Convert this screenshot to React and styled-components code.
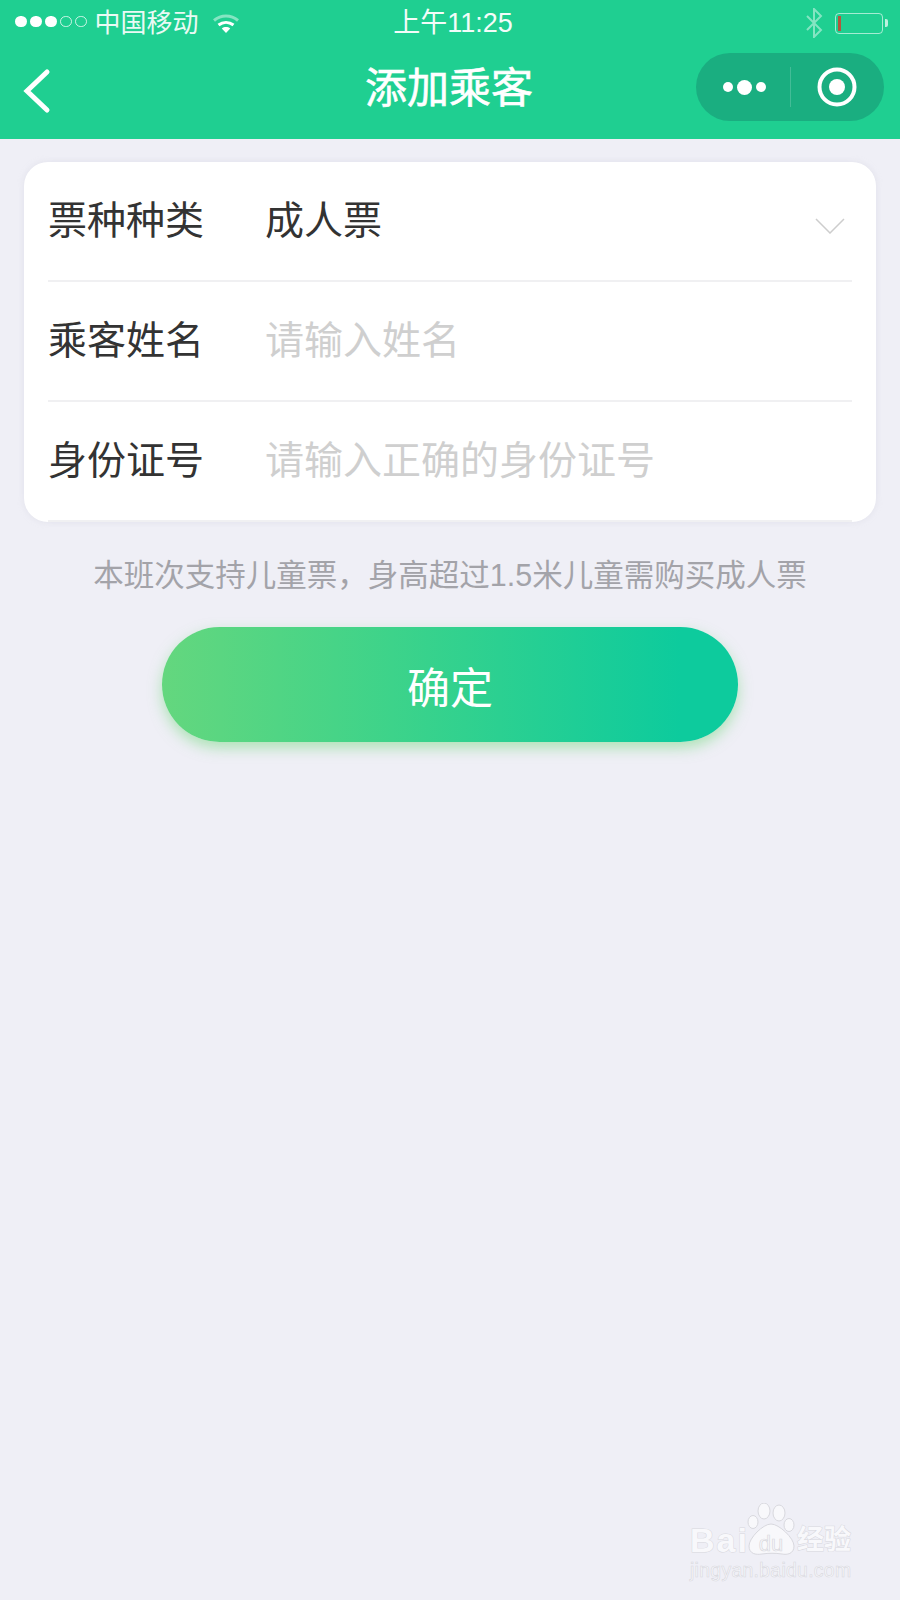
import React from 'react';
import styled, { createGlobalStyle } from 'styled-components';

const GlobalStyle = createGlobalStyle`
  html, body {
    margin: 0;
    padding: 0;
    background: #efeff6;
  }
  body {
    font-family: 'Liberation Sans', 'Noto Sans CJK SC', sans-serif;
  }
  * {
    box-sizing: border-box;
  }
`;

const Page = styled.div`
  position: relative;
  width: 900px;
  height: 1600px;
  overflow: hidden;
  background: #efeff6;
`;

const TopArea = styled.header`
  height: 139px;
  background: #1fcf91;
  color: #fff;
`;

const StatusBar = styled.div`
  display: grid;
  grid-template-columns: 1fr auto 1fr;
  align-items: center;
  height: 44px;
  padding: 0 12px 0 15px;
`;

const StatusLeft = styled.div`
  display: flex;
  align-items: center;
`;

const StatusRight = styled.div`
  display: flex;
  align-items: center;
  justify-content: flex-end;
`;

const Signal = styled.div`
  display: flex;
  gap: 3.5px;
  margin: -3px 8px 0 0;
`;

const SignalDot = styled.span`
  width: 11.5px;
  height: 11.5px;
  border-radius: 50%;
  border: 1px solid rgba(255, 255, 255, 0.75);
  background: ${(p) => (p.$on ? '#fff' : 'transparent')};
`;

const Carrier = styled.span`
  font-size: 26px;
  line-height: 46px;
  opacity: 0.9;
`;

const Clock = styled.span`
  margin-left: 3px;
  font-size: 27px;
  line-height: 46px;
  opacity: 0.95;
`;

const WifiIcon = styled.svg`
  margin-left: 13px;
  margin-top: 1px;
`;

const BluetoothIcon = styled.svg`
  margin-right: 12px;
`;

const Battery = styled.div`
  position: relative;
  width: 48px;
  height: 21px;
  margin-right: 5px;
  padding: 2px;
  border: 1.5px solid rgba(255, 255, 255, 0.6);
  border-radius: 4px;

  &::after {
    content: '';
    position: absolute;
    right: -6px;
    top: 5px;
    width: 3px;
    height: 8px;
    border-radius: 0 2px 2px 0;
    background: rgba(255, 255, 255, 0.7);
  }
`;

const BatteryLevel = styled.div`
  width: 3px;
  height: 100%;
  background: #b5563c;
`;

const NavBar = styled.div`
  display: grid;
  grid-template-columns: 1fr auto 1fr;
  align-items: center;
  height: 86px;
  padding: 0 16px 0 14px;
`;

const BackButton = styled.svg`
  display: block;
  margin: 8px 0 0 9px;
`;

const Title = styled.h1`
  margin: 4px 0 0;
  font-size: 42px;
  line-height: 82px;
  font-weight: 400;
  -webkit-text-stroke: 0.6px #fff;
`;

const Capsule = styled.div`
  display: flex;
  align-items: center;
  justify-self: end;
  width: 188px;
  height: 68px;
  border-radius: 34px;
  background: #1aae80;
`;

const CapsuleHalf = styled.div`
  display: flex;
  width: 50%;
  align-items: center;
  justify-content: center;
  gap: 4px;
  padding-left: ${(p) => p.$inset || 0}px;
`;

const CapsuleDivider = styled.div`
  flex-shrink: 0;
  width: 1px;
  height: 40px;
  background: rgba(255, 255, 255, 0.18);
`;

const MenuDot = styled.span`
  width: ${(p) => (p.$big ? 15 : 10)}px;
  height: ${(p) => (p.$big ? 15 : 10)}px;
  border-radius: 50%;
  background: #fff;
`;

const Main = styled.main`
  padding: 23px 24px 0;
`;

const Card = styled.section`
  background: #fff;
  border-radius: 24px;
  box-shadow: 0 0 6px rgba(200, 200, 215, 0.35);
  overflow: hidden;
  height: 360px;
`;

const Row = styled.div`
  display: flex;
  align-items: center;
  height: 120px;
  margin: 0 24px;
  padding-bottom: 9px;
  border-bottom: 2px solid #f0f0f2;
`;

const Label = styled.span`
  width: 217px;
  flex-shrink: 0;
  font-size: 39px;
  color: #333;
`;

const Value = styled.span`
  flex: 1;
  font-size: 39px;
  color: ${(p) => (p.$placeholder ? '#cfcfcf' : '#333')};
`;

const Chevron = styled.svg`
  margin: 18px 7px 0 0;
`;

const Hint = styled.p`
  margin: 32px 0 0;
  text-align: center;
  font-size: 30.5px;
  line-height: 42px;
  color: #a3a3a9;
  white-space: nowrap;
`;

const ConfirmButton = styled.button`
  display: block;
  width: 576px;
  height: 115px;
  margin: 31px auto 0;
  border: 0;
  border-radius: 58px;
  background: linear-gradient(90deg, #64d77e 0%, #3dd38a 40%, #0dcb9d 90%);
  box-shadow: 0 6px 14px rgba(110, 215, 120, 0.5);
  color: #fff;
  font-family: inherit;
  font-size: 43px;
`;

const Watermark = styled.div`
  position: absolute;
  left: 690px;
  top: 1503px;
  color: #fff;
`;

const BrandRow = styled.div`
  display: flex;
  align-items: flex-end;
  height: 52px;
`;

const BrandText = styled.span`
  font-size: ${(p) => p.$size}px;
  font-weight: 700;
  line-height: 30px;
  letter-spacing: ${(p) => p.$spacing || 0}px;
  color: #f8f8fb;
  -webkit-text-stroke: 1px #d8d8de;
  paint-order: stroke fill;
  white-space: nowrap;
`;

const PawIcon = styled.svg`
  margin: 0 2px 0 -2px;
  flex-shrink: 0;
`;

const Domain = styled.div`
  margin-top: 3px;
  font-size: 19.4px;
  line-height: 24px;
  letter-spacing: 0.3px;
  color: #f8f8fb;
  -webkit-text-stroke: 0.6px #d8d8de;
  white-space: nowrap;
`;

const App = () => (
  <Page>
    <GlobalStyle />
    <TopArea>
      <StatusBar>
        <StatusLeft>
          <Signal>
            {[true, true, true, false, false].map((on, i) => (
              <SignalDot key={i} $on={on} />
            ))}
          </Signal>
          <Carrier>中国移动</Carrier>
          <WifiIcon width="28" height="20" viewBox="0 0 28 20" fill="none" stroke="#fff" strokeWidth="3">
            <path d="M2 6.500C9 0.500 19 0.500 26 6.500" opacity="0.45" />
            <path d="M6.500 11C11 7.500 17 7.500 21.500 11" />
            <path d="M14 19l-4.200-4.600c2.400-1.800 6-1.800 8.400 0z" fill="#fff" stroke="none" />
          </WifiIcon>
        </StatusLeft>
        <Clock>上午11:25</Clock>
        <StatusRight>
          <BluetoothIcon width="18" height="30" viewBox="0 0 18 30" fill="none" stroke="rgba(255,255,255,0.45)" strokeWidth="2">
            <path d="M2 8l14 14-7 7V1l7 7L2 22" />
          </BluetoothIcon>
          <Battery>
            <BatteryLevel />
          </Battery>
        </StatusRight>
      </StatusBar>
      <NavBar>
        <BackButton width="30" height="46" viewBox="0 0 30 46" fill="none" stroke="#fff" strokeWidth="5" strokeLinecap="round">
          <path d="M24 4L4 23l20 19" />
        </BackButton>
        <Title>添加乘客</Title>
        <Capsule>
          <CapsuleHalf $inset={4}>
            <MenuDot />
            <MenuDot $big />
            <MenuDot />
          </CapsuleHalf>
          <CapsuleDivider />
          <CapsuleHalf>
            <svg width="42" height="42" viewBox="0 0 42 42">
              <circle cx="21" cy="21" r="17.500" fill="none" stroke="#fff" strokeWidth="4" />
              <circle cx="21" cy="21" r="8" fill="#fff" />
            </svg>
          </CapsuleHalf>
        </Capsule>
      </NavBar>
    </TopArea>
    <Main>
      <Card>
        <Row>
          <Label>票种种类</Label>
          <Value>成人票</Value>
          <Chevron width="30" height="16" viewBox="0 0 30 16" fill="none" stroke="#cdcdcd" strokeWidth="1.500">
            <path d="M1 1l14 14L29 1" />
          </Chevron>
        </Row>
        <Row>
          <Label>乘客姓名</Label>
          <Value $placeholder>请输入姓名</Value>
        </Row>
        <Row>
          <Label>身份证号</Label>
          <Value $placeholder>请输入正确的身份证号</Value>
        </Row>
      </Card>
      <Hint>本班次支持儿童票，身高超过1.5米儿童需购买成人票</Hint>
    </Main>
    <ConfirmButton>确定</ConfirmButton>
    <Watermark>
      <BrandRow>
        <BrandText $size={34} $spacing={2}>Bai</BrandText>
        <PawIcon width="48" height="52" viewBox="0 0 48 52" fill="#f8f8fb" stroke="#d8d8de">
          <ellipse cx="17" cy="8" rx="6" ry="8" />
          <ellipse cx="32" cy="10" rx="6" ry="8" />
          <ellipse cx="6" cy="19" rx="5" ry="6.500" />
          <ellipse cx="42" cy="22" rx="5" ry="6.500" />
          <path d="M24 21c8 0 23 14 23 22 0 8-7 9-12 8-7-1-13-1-20 0-6 1-13 0-13-8 0-8 14-22 22-22z" />
          <text x="24" y="48" textAnchor="middle" fontSize="22" fontFamily="Liberation Sans" strokeWidth="0.700">du</text>
        </PawIcon>
        <BrandText $size={27}>经验</BrandText>
      </BrandRow>
      <Domain>jingyan.baidu.com</Domain>
    </Watermark>
  </Page>
);

export default App;
